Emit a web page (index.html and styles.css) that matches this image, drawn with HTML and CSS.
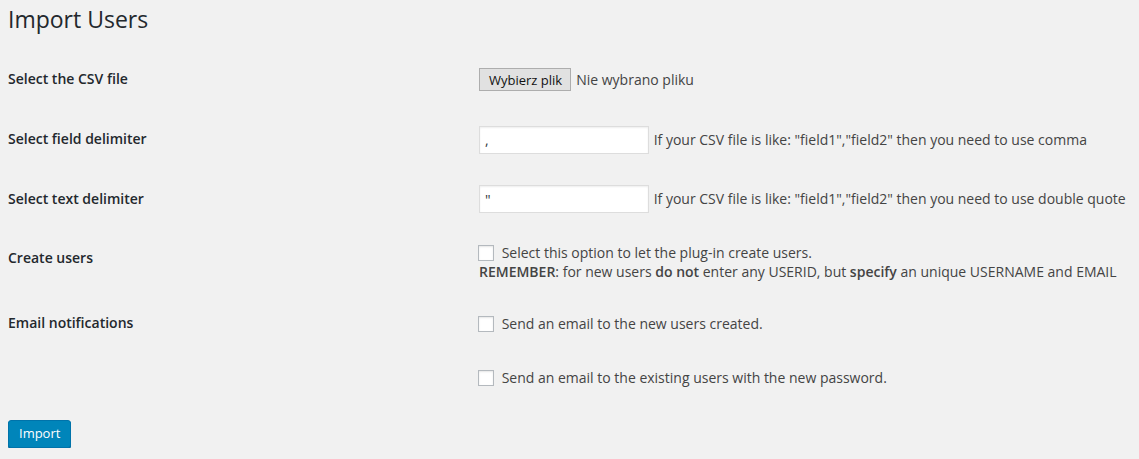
FILE: index.html
```html
<!DOCTYPE html>
<html lang="en">
  <head>
    <meta charset="utf-8">
    <title>Import Users</title>
    <link rel="stylesheet" href="styles.css">
  </head>
  <body>
    <div class="wrap">
      <h1>Import Users</h1>

      <form class="import-form" action="#" method="post">
        <table class="form-table">
          <tr>
            <th>Select the CSV file</th>
            <td>
              <span class="file-field">
                <button type="button" class="file-button">Wybierz plik</button>
                <span class="file-name">Nie wybrano pliku</span>
              </span>
            </td>
          </tr>
          <tr>
            <th>Select field delimiter</th>
            <td>
              <input type="text" class="text-input" name="delimiter" value=",">
              <span class="description">If your CSV file is like: "field1","field2" then you need to use comma</span>
            </td>
          </tr>
          <tr>
            <th>Select text delimiter</th>
            <td>
              <input type="text" class="text-input" name="enclosure" value='"'>
              <span class="description">If your CSV file is like: "field1","field2" then you need to use double quote</span>
            </td>
          </tr>
          <tr class="top-row">
            <th>Create users</th>
            <td>
              <label class="check"><input type="checkbox" name="create_users"> Select this option to let the plug-in create users.</label><br>
              <strong>REMEMBER</strong>: for new users <strong>do not</strong> enter any USERID, but <strong>specify</strong> an unique USERNAME and EMAIL
            </td>
          </tr>
          <tr>
            <th>Email notifications</th>
            <td>
              <label class="check"><input type="checkbox" name="notify_new"> Send an email to the new users created.</label>
            </td>
          </tr>
          <tr>
            <th></th>
            <td>
              <label class="check"><input type="checkbox" name="notify_existing"> Send an email to the existing users with the new password.</label>
            </td>
          </tr>
        </table>

        <p class="submit"><button type="submit" class="button-primary">Import</button></p>
      </form>
    </div>
  </body>
</html>
```

FILE: styles.css
```css
html {
    background: #f1f1f1;
}

body {
    margin: 0;
    font-family: 'Open Sans', sans-serif;
    font-size: 14px;
    line-height: 1.3;
    color: #444;
}

.wrap {
    padding: 0 8px;
}

h1 {
    margin: 0;
    padding: 5px 0 4px;
    font-size: 23px;
    font-weight: 400;
    line-height: 29px;
    color: #23282d;
}

.form-table {
    border-collapse: collapse;
    width: 100%;
    margin-top: 12px;
}

.form-table th {
    width: 461px;
    padding: 20px 10px 21.6px 0;
    text-align: left;
    vertical-align: top;
    font-weight: 600;
    color: #23282d;
}

.form-table td {
    padding: 15px 0;
    vertical-align: middle;
    white-space: nowrap;
}

.form-table .top-row td {
    padding-bottom: 13px;
    vertical-align: top;
}

.file-field {
    display: inline-flex;
    align-items: center;
    gap: 5px;
}

.file-button {
    height: 23px;
    padding: 0 8px 0 9px;
    font-family: 'Open Sans', sans-serif;
    font-size: 13px;
    color: #111;
    background: #e1e1e1;
    border: 1px solid #adadad;
    border-radius: 0;
}

.text-input {
    box-sizing: border-box;
    width: 170px;
    height: 28px;
    margin: 0 1px 0 0;
    padding: 3px 5px;
    font-family: 'Open Sans', sans-serif;
    font-size: 14px;
    color: #32373c;
    background: #fff;
    border: 1px solid #ddd;
    box-shadow: inset 0 1px 2px rgba(0, 0, 0, .07);
    vertical-align: middle;
}

.description {
    vertical-align: middle;
}

.check input {
    appearance: none;
    box-sizing: border-box;
    width: 16px;
    height: 16px;
    margin: 0 4px 0 -1px;
    vertical-align: -3px;
    background: #fff;
    border: 1px solid #b4b9be;
    box-shadow: inset 0 1px 2px rgba(0, 0, 0, .1);
}

strong {
    font-weight: 600;
}

.submit {
    margin: 0;
    padding: 18px 0 0;
}

.button-primary {
    height: 28px;
    padding: 0 10px 1px;
    font-family: 'Open Sans', sans-serif;
    font-size: 13px;
    color: #fff;
    background: #0085ba;
    border: 1px solid #0073aa;
    border-radius: 3px;
    box-shadow: 0 1px 0 #006799;
}
```
